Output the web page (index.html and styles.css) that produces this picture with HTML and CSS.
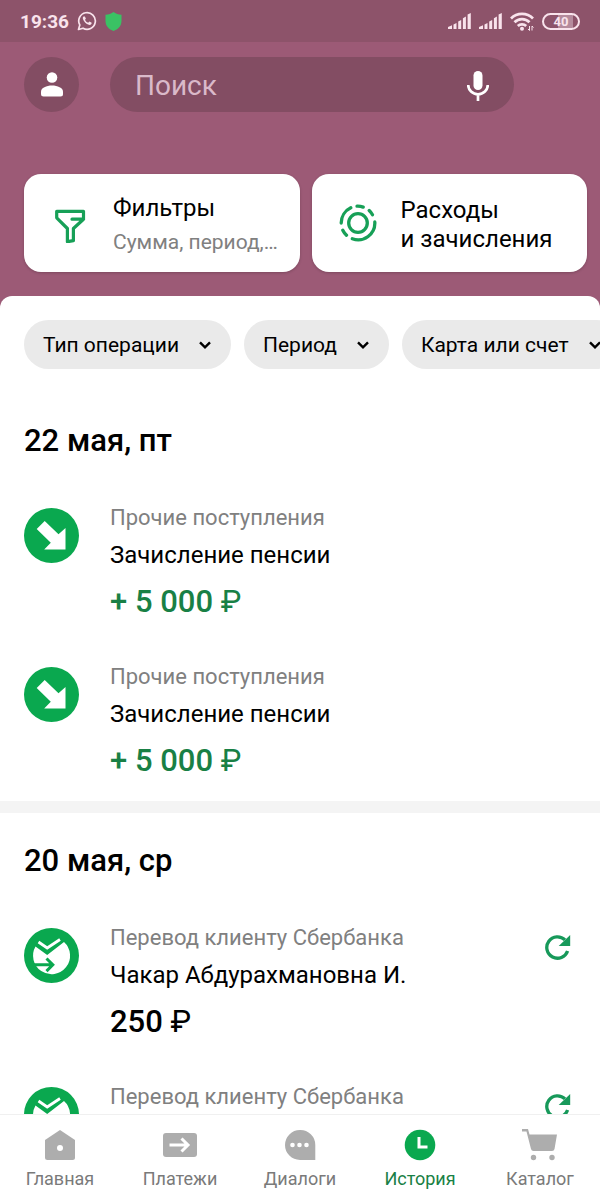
FILE: index.html
```html
<!DOCTYPE html>
<html lang="ru">
<head>
<meta charset="utf-8">
<meta name="viewport" content="width=device-width, initial-scale=1">
<title>История</title>
<link rel="stylesheet" href="styles.css">
</head>
<body>
<svg class="defs" aria-hidden="true">
  <symbol id="chevron" viewBox="0 0 12 8"><path d="M1 1.300 6 6.300l5-5" fill="none" stroke="currentColor" stroke-width="2.400"/></symbol>
  <symbol id="signal" viewBox="0 0 23 16"><path d="M0 16v-2l4-1.800V16zM5.500 11.500l3-1.500v6h-3zM10.200 8.500l3-1.500v9h-3zM14.900 5.300l3-1.700V16h-3zM19.600 1.500 22.800 0v16h-3.200z" fill="currentColor"/></symbol>
  <symbol id="income" viewBox="0 0 55 55"><circle cx="27.500" cy="27.500" r="27.500" fill="#0aa84f"/><path d="M20.700 13 34.500 26.300 41.500 20v21.500H20.200L26.800 34.700 12.700 21z" fill="#fff"/></symbol>
  <symbol id="transfer" viewBox="0 0 55 55"><circle cx="27.500" cy="27.500" r="27.500" fill="#0aa84f"/><path d="M11.500 18.500 23.200 27 40 14A18.500 18.500 0 1 1 11.500 18.500z" fill="#fff"/><path d="M14.500 14 23.200 20 36 11.500" fill="none" stroke="#fff" stroke-width="2.800"/><path d="M8 36.800H28M22.500 30.500l6.300 6.300-6.300 6.300" fill="none" stroke="#0aa84f" stroke-width="3"/></symbol>
  <symbol id="repeat" viewBox="0 0 26 26"><path d="M20 5.900A10.700 10.700 0 1 0 22.600 17" fill="none" stroke="#17995a" stroke-width="3.300"/><path d="M25.200 1v11H13.700z" fill="#17995a"/></symbol>
</svg>

<div class="status">
  <time class="clock">19:36</time>
  <svg class="whatsapp" viewBox="0 0 20 20" aria-hidden="true"><path d="M1.500 18.500 2.800 14A8.300 8.300 0 1 1 6 17.200z" fill="none" stroke="currentColor" stroke-width="1.700" stroke-linejoin="round"/><path d="M6.500 5.500c-1 .7-1 2.300.3 4.200 1.600 2.500 3.700 4.100 5.900 4.200 1.300 0 2-1 2-2.100l-2.300-1.200-1.200 1.200C9.700 11.200 8.700 10.200 8 8.700l.9-1L7.900 5.500z" fill="currentColor"/></svg>
  <svg class="shield" viewBox="0 0 17 19" aria-hidden="true"><path d="M8.500 0C10.500 1.700 13.500 2.500 16.500 2.700V9c0 5-3.500 8.500-8 10C4 17.500.5 14 .5 9V2.700C3.500 2.500 6.500 1.700 8.500 0z" fill="#3ac264"/></svg>
  <span class="spacer"></span>
  <svg class="signal" aria-hidden="true"><use href="#signal"/></svg>
  <svg class="signal" aria-hidden="true"><use href="#signal"/></svg>
  <svg class="wifi" viewBox="0 0 24 19" aria-hidden="true"><g fill="none" stroke="currentColor" stroke-width="2.700"><path d="M1 6.500a15.500 15.500 0 0 1 22 0"/><path d="M4.500 10.300a10.500 10.500 0 0 1 15 0"/><path d="M7.800 14a6 6 0 0 1 8.400 0"/></g><circle cx="12" cy="16.700" r="2" fill="currentColor"/><path d="M19.500 14v4.500l-1.500-1.500M22 18.500V14l1.500 1.500" fill="none" stroke="currentColor"/></svg>
  <span class="battery">40</span>
</div>

<header class="header">
  <div class="search-row">
    <button class="avatar" aria-label="Профиль"><svg viewBox="0 0 22 25" aria-hidden="true"><circle cx="11" cy="5.500" r="5.300" fill="#fff"/><path d="M0 22v-2.500C0 16 5.500 13.500 11 13.500S22 16 22 19.500V22q0 2.500-2.500 2.500h-17Q0 24.500 0 22z" fill="#fff"/></svg></button>
    <div class="search">
      <input type="search" placeholder="Поиск" aria-label="Поиск">
      <button class="mic" aria-label="Голосовой поиск"><svg viewBox="0 0 22 30" aria-hidden="true"><rect x="6.500" y="0" width="9" height="19" rx="4.500" fill="#fff"/><path d="M1.200 14a9.800 9.300 0 0 0 19.600 0M11 23v7" fill="none" stroke="#fff" stroke-width="2.700"/></svg></button>
    </div>
  </div>
  <div class="cards">
    <button class="card">
      <svg class="card-icon" viewBox="0 0 40 40" aria-hidden="true"><path d="M22 16.200H33.500M33.500 16.200V8.300H6.700v6.500L17.400 25.500v13.200l6-1V25.500L33.500 16.200" fill="none" stroke="#17a057" stroke-width="3.200" stroke-linejoin="round" stroke-linecap="round"/></svg>
      <span class="card-text"><span class="card-title">Фильтры</span><span class="card-note">Сумма, период,…</span></span>
    </button>
    <button class="card">
      <svg class="card-icon" viewBox="0 0 40 40" aria-hidden="true"><g fill="none" stroke="#17a057" stroke-width="3.300" stroke-linecap="round"><circle cx="20" cy="20" r="9.300"/><path d="M3.200 20A16.800 16.800 0 0 1 12.800 4.800M19 3.200a16.800 16.800 0 0 1 6.200 .9M31.200 7.500a16.800 16.800 0 0 1 3.300 4.200M36.800 19A16.800 16.800 0 0 1 14.300 35.800M8.500 32.200a16.800 16.800 0 0 1-3.700-5"/></g></svg>
      <span class="card-text"><span class="card-title">Расходы<br>и зачисления</span></span>
    </button>
  </div>
</header>

<main class="sheet">
  <div class="chips">
    <button class="chip">Тип операции<svg aria-hidden="true"><use href="#chevron"/></svg></button>
    <button class="chip">Период<svg aria-hidden="true"><use href="#chevron"/></svg></button>
    <button class="chip">Карта или счет<svg aria-hidden="true"><use href="#chevron"/></svg></button>
  </div>

  <section class="day">
    <h2>22 мая, пт</h2>
    <ul>
      <li class="entry">
        <svg class="badge" aria-hidden="true"><use href="#income"/></svg>
        <div class="info"><p class="kind">Прочие поступления</p><p class="name">Зачисление пенсии</p><p class="sum plus">+ 5 000 <span>₽</span></p></div>
      </li>
      <li class="entry">
        <svg class="badge" aria-hidden="true"><use href="#income"/></svg>
        <div class="info"><p class="kind">Прочие поступления</p><p class="name">Зачисление пенсии</p><p class="sum plus">+ 5 000 <span>₽</span></p></div>
      </li>
    </ul>
  </section>

  <section class="day">
    <h2>20 мая, ср</h2>
    <ul>
      <li class="entry">
        <svg class="badge" aria-hidden="true"><use href="#transfer"/></svg>
        <div class="info"><p class="kind">Перевод клиенту Сбербанка</p><p class="name">Чакар Абдурахмановна И.</p><p class="sum">250 <span>₽</span></p></div>
        <button class="repeat" aria-label="Повторить"><svg aria-hidden="true"><use href="#repeat"/></svg></button>
      </li>
      <li class="entry">
        <svg class="badge" aria-hidden="true"><use href="#transfer"/></svg>
        <div class="info"><p class="kind">Перевод клиенту Сбербанка</p></div>
        <button class="repeat" aria-label="Повторить"><svg aria-hidden="true"><use href="#repeat"/></svg></button>
      </li>
    </ul>
  </section>
</main>

<nav class="tabs">
  <a href="#home"><svg viewBox="0 0 36 34" aria-hidden="true"><path d="M18 1 33 11v17.500Q33 31 30.500 31h-25Q3 31 3 28.500V11z" fill="#adadad"/><circle cx="18" cy="19" r="3" fill="#fff"/></svg>Главная</a>
  <a href="#payments"><svg viewBox="0 0 36 34" aria-hidden="true"><rect x="1" y="4" width="34" height="24" rx="3" fill="#adadad"/><path d="M7.500 16H26M19.500 9.500 26 16l-6.500 6.500" fill="none" stroke="#fff" stroke-width="3"/></svg>Платежи</a>
  <a href="#dialogs"><svg viewBox="0 0 36 34" aria-hidden="true"><path d="M18 1A15 15 0 0 1 33.300 16V31H18A15 15 0 0 1 18 1z" fill="#adadad"/><g fill="#fff"><circle cx="10.500" cy="16" r="2.300"/><circle cx="17.500" cy="16" r="2.300"/><circle cx="24.500" cy="16" r="2.300"/></g></svg>Диалоги</a>
  <a href="#history" class="active" aria-current="page"><svg viewBox="0 0 36 34" aria-hidden="true"><circle cx="18" cy="16" r="15.300" fill="#0aa84f"/><path d="M17 8v10h8.500" fill="none" stroke="#fff" stroke-width="3"/></svg>История</a>
  <a href="#catalog"><svg viewBox="0 0 36 34" aria-hidden="true"><path d="M0 0H6l1.500 5.500H35L32.500 20q-.4 2-2.500 2H11.500Q9.500 22 9 20L4.500 2.500H0z" fill="#adadad"/><circle cx="11.500" cy="28.500" r="2.700" fill="#adadad"/><circle cx="30" cy="28.500" r="2.700" fill="#adadad"/></svg>Каталог</a>
</nav>
</body>
</html>
```
FILE: styles.css
```css
* { box-sizing: border-box; }
body {
  margin: 0;
  height: 100vh;
  display: flex;
  flex-direction: column;
  overflow: hidden;
  background: #9c5a76;
  color: #000;
  font-family: Roboto, "Noto Sans", sans-serif;
}
button { border: 0; padding: 0; font: inherit; color: inherit; background: none; }
h2, p, ul { margin: 0; padding: 0; }
svg { display: block; flex: none; }
.defs { position: absolute; width: 0; height: 0; }

.status {
  flex: none;
  height: 42px;
  padding: 0 20px;
  display: flex;
  align-items: center;
  gap: 8px;
  background: #8d536a;
  color: #f9e3ec;
}
.clock { font-size: 19px; font-weight: 700; }
.whatsapp { width: 20px; height: 20px; }
.shield { width: 17px; height: 19px; }
.spacer { flex: 1; }
.signal { width: 23px; height: 16px; }
.wifi { width: 24px; height: 19px; }
.battery {
  width: 38px;
  height: 17px;
  border: 2px solid currentColor;
  border-radius: 9px;
  background: linear-gradient(90deg, transparent 40%, #b58b9d 40%, #b58b9d 85%, transparent 85%);
  font-size: 13px;
  line-height: 13px;
  font-weight: 700;
  text-align: center;
}

.header { flex: none; padding: 15px 13px 24px 24px; }
.search-row { display: flex; gap: 31px; margin-right: 73px; }
.avatar {
  flex: none;
  width: 55px;
  height: 55px;
  display: grid;
  place-items: center;
  border-radius: 50%;
  background: #834d63;
}
.avatar svg { width: 22px; height: 25px; }
.search {
  flex: 1;
  min-width: 0;
  height: 55px;
  padding: 2px 25px 0;
  display: flex;
  align-items: center;
  border-radius: 28px;
  background: #834d63;
}
.search input {
  flex: 1;
  min-width: 0;
  padding: 0;
  border: 0;
  outline: 0;
  background: none;
  font: 28px/36px Roboto, "Noto Sans", sans-serif;
  color: #fff;
}
.search input::placeholder { color: #dab9c9; opacity: 1; }
.mic svg { width: 22px; height: 30px; }

.cards { display: grid; grid-template-columns: 1fr 1fr; gap: 12px; margin-top: 62px; }
.card {
  min-width: 0;
  height: 98px;
  padding: 0 18px 0 26px;
  display: flex;
  align-items: center;
  gap: 23px;
  border-radius: 17px;
  background: #fff;
  box-shadow: 0 1px 3px rgba(0, 0, 0, .2);
  text-align: left;
}
.card-icon { width: 40px; height: 40px; }
.card-text { min-width: 0; padding-top: 4px; }
.card-title { display: block; font-size: 24px; line-height: 29px; white-space: nowrap; }
.card-note {
  display: block;
  margin-top: 4px;
  white-space: nowrap;
  font-size: 21px;
  line-height: 30px;
  color: #808080;
}

.sheet {
  flex: 1;
  min-height: 0;
  overflow: hidden;
  border-radius: 12px 12px 0 0;
  background: #fff;
}
.chips { display: flex; gap: 13px; padding: 24px 0 24px 24px; overflow: hidden; }
.chip {
  flex: none;
  height: 49px;
  padding: 0 20px 0 19px;
  display: flex;
  align-items: center;
  gap: 20px;
  border-radius: 25px;
  background: #eaeaea;
  font-size: 21px;
}
.chip svg { width: 12px; height: 8px; }

.day { padding: 30px 24px 15px; }
.day + .day { border-top: 12px solid #f4f4f4; }
.day h2 { font-size: 31px; line-height: 36px; font-weight: 500; }
.day ul { display: grid; gap: 35px; margin-top: 44px; list-style: none; }
.entry { display: flex; align-items: flex-start; gap: 31px; }
.badge { width: 55px; height: 55px; margin-top: 5px; }
.info { flex: 1; min-width: 0; }
.kind { font-size: 22px; line-height: 30px; color: #808080; }
.name { font-size: 24px; line-height: 44px; }
.sum { font-size: 31px; line-height: 50px; font-weight: 500; }
.sum span { font-weight: 400; }
.plus { color: #198045; }
.repeat { margin: 11px 5px 0 0; }
.repeat svg { width: 26px; height: 26px; }

.tabs {
  flex: none;
  height: 85px;
  display: grid;
  grid-template-columns: repeat(5, 1fr);
  border-top: 1px solid #f0f0f0;
  background: #fff;
}
.tabs a {
  padding-top: 14px;
  display: flex;
  flex-direction: column;
  align-items: center;
  gap: 4px;
  font-size: 18px;
  line-height: 24px;
  color: #7a7a7a;
  text-decoration: none;
}
.tabs svg { width: 36px; height: 34px; }
.tabs .active { color: #198045; }
```
